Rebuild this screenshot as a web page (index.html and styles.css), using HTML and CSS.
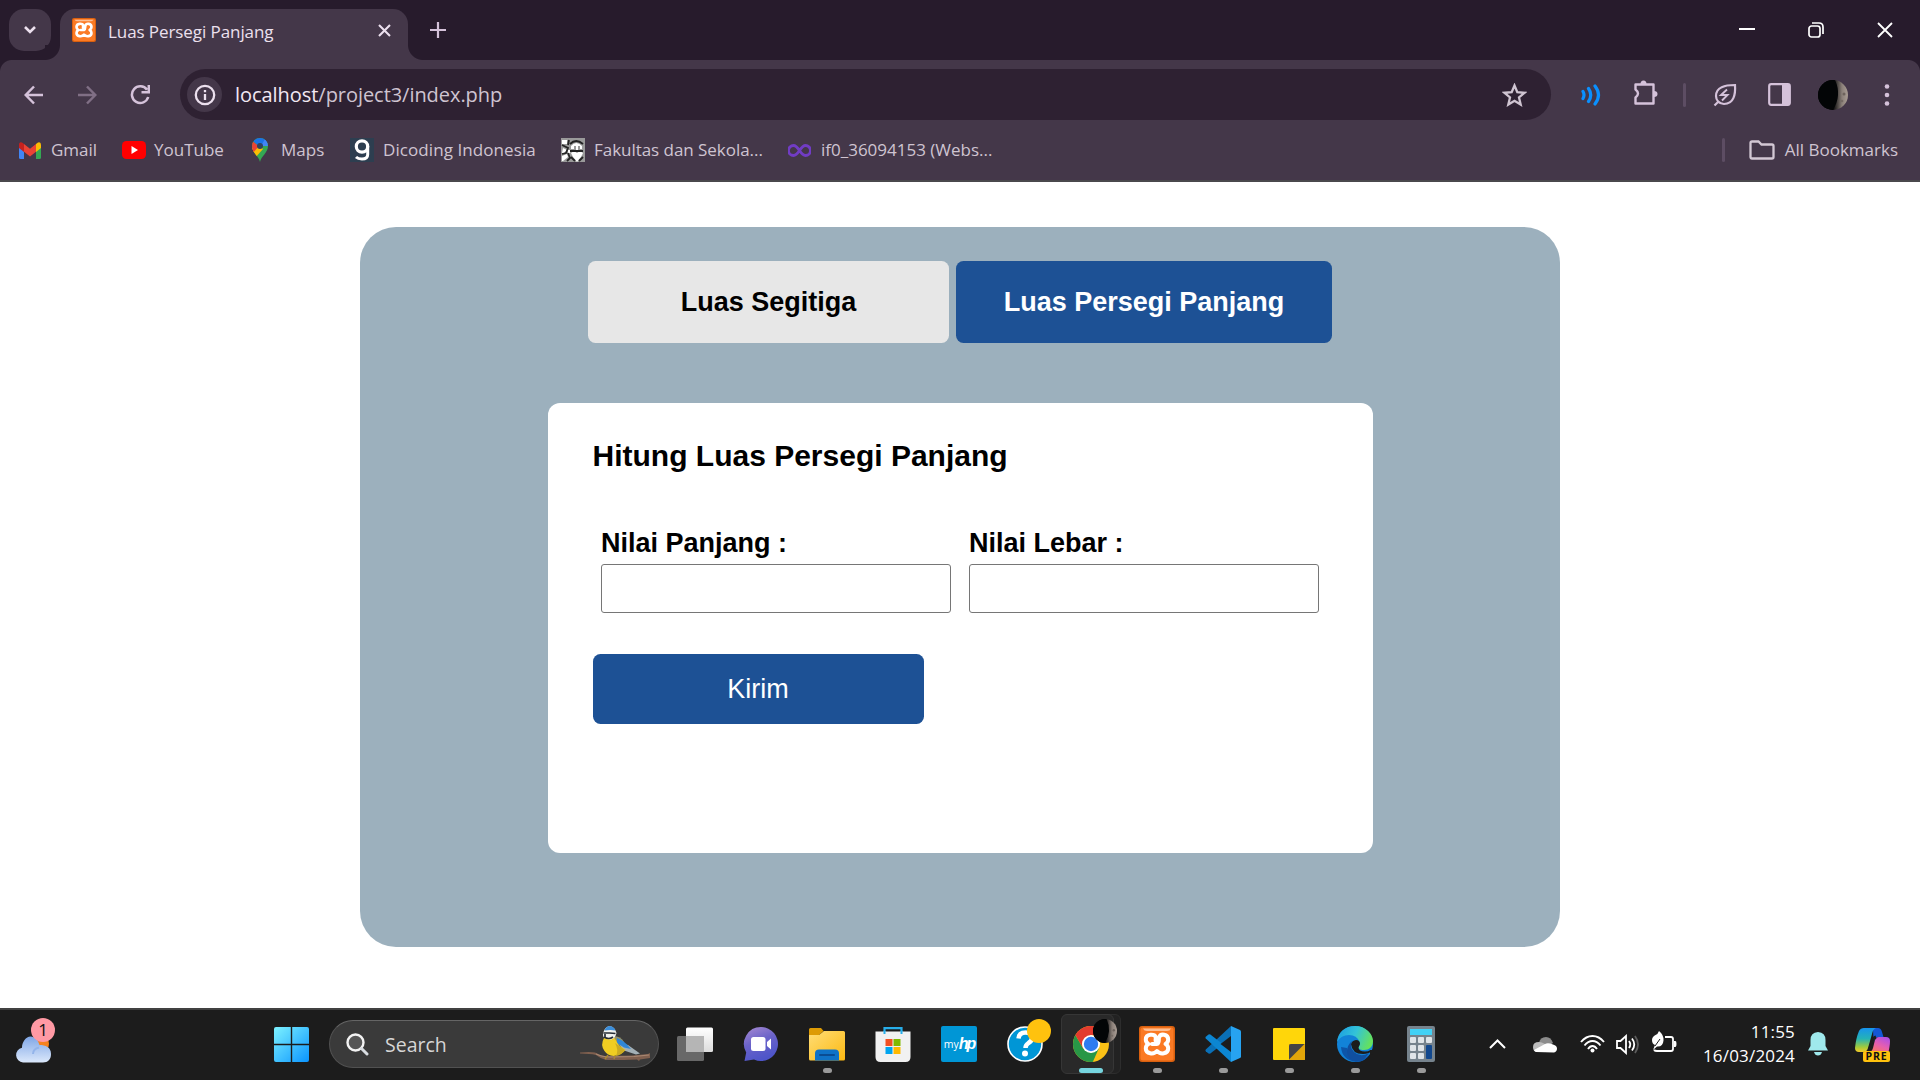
FILE: index.html
```html
<!DOCTYPE html>
<html lang="id">
<head>
<meta charset="utf-8">
<title>Luas Persegi Panjang</title>
<link rel="stylesheet" href="styles.css">
</head>
<body>
<svg class="defs" aria-hidden="true">
  <defs>
    <symbol id="xampp" viewBox="0 0 36 36">
      <rect width="36" height="36" rx="3" fill="#d9600f"/>
      <rect x="1.500" y="1.500" width="33" height="33" rx="2.500" fill="#fb7a24"/>
      <path d="M4 2.500h28q-1 2.500-4 2.500H8Q5 5 4 2.500z" fill="#fdbf94"/>
      <path d="M16.500 14.500C18 8.500 13.500 8.500 11.500 8.700 8.500 9 6.800 11 6.800 13.500c0 2.300 1.200 3.700 2.700 4.500-1.500.8-2.700 2.200-2.700 4.500 0 5.500 8 6.300 11.200 2.500 3.200 3.800 11.200 3 11.200-2.500 0-2.300-1.200-3.700-2.700-4.500 1.500-.8 2.700-2.200 2.700-4.500 0-5.500-7.700-6.500-9.200-2-.5 2 .5 5.500-2 6.500h-5" fill="none" stroke="#fff" stroke-width="4" stroke-linecap="round" stroke-linejoin="round"/>
    </symbol>
    <symbol id="moon" viewBox="0 0 30 30">
      <clipPath id="mc"><circle cx="15" cy="15" r="15"/></clipPath>
      <linearGradient id="mg"><stop offset=".5" stop-color="#050607"/><stop offset=".8" stop-color="#8b8079"/><stop offset="1" stop-color="#a99d94"/></linearGradient>
      <g clip-path="url(#mc)">
        <rect width="30" height="30" fill="url(#mg)"/>
        <path d="M17 0q7 15-2 30H0V0z" fill="#030506"/>
        <circle cx="26" cy="14" r="1.500" fill="#6d635d"/><circle cx="24" cy="21" r="1.300" fill="#746a63"/>
      </g>
    </symbol>
  </defs>
</svg>

<div class="screen">
  <header class="browser">
    <div class="tabstrip">
      <button class="tab-search"><svg width="14" height="10" viewBox="0 0 14 10"><path d="M2 2l5 5 5-5" fill="none" stroke="#ece0ee" stroke-width="2.600"/></svg></button>
      <div class="tab">
        <svg width="24" height="24"><use href="#xampp"/></svg>
        <span class="tab-title">Luas Persegi Panjang</span>
        <svg width="13" height="13" viewBox="0 0 13 13"><path d="M1 1l11 11M12 1L1 12" stroke="#ece0ee" stroke-width="2.100"/></svg>
      </div>
      <svg class="new-tab" width="16" height="16" viewBox="0 0 16 16"><path d="M8 0v16M0 8h16" stroke="#d5c2da" stroke-width="2.200"/></svg>
      <div class="window-controls">
        <svg width="16" height="16" viewBox="0 0 16 16"><path d="M0 7h16" stroke="#fff" stroke-width="2"/></svg>
        <svg width="16" height="16" viewBox="0 0 16 16" fill="none" stroke="#fff" stroke-width="1.700"><rect x="1" y="4" width="11" height="11" rx="2.500"/><path d="M4 1h7q4 0 4 4v7"/></svg>
        <svg width="16" height="16" viewBox="0 0 16 16"><path d="M1 1l14 14M15 1L1 15" stroke="#fff" stroke-width="1.800"/></svg>
      </div>
    </div>

    <div class="toolbar">
      <div class="nav">
        <svg width="20" height="20" viewBox="0 0 20 20" fill="none" stroke="#d5c2da" stroke-width="2.500"><path d="M19 10H2M10 1.500L1.700 10l8.300 8.500"/></svg>
        <svg width="20" height="20" viewBox="0 0 20 20" fill="none" stroke="#806f85" stroke-width="2.500"><path d="M1 10h17M10 1.500l8.300 8.500-8.300 8.500"/></svg>
        <svg width="20" height="20" viewBox="0 0 20 20" fill="none" stroke="#d5c2da" stroke-width="2.500"><path d="M17 4.800A8.300 8.300 0 1 0 18.200 12M18.800 0v7.300h-7.300"/></svg>
      </div>
      <div class="omnibox">
        <span class="site-info"><svg width="22" height="22" viewBox="0 0 22 22"><circle cx="11" cy="11" r="9.200" fill="none" stroke="#ece0ee" stroke-width="2.300"/><path d="M11 10v6M11 6v2.200" stroke="#ece0ee" stroke-width="2.300"/></svg></span>
        <span class="url"><b>localhost</b>/project3/index.php</span>
        <svg class="star" width="25" height="24" viewBox="0 0 25 24"><path d="M12.500 2.500l2.800 6.700 7.200.6-5.500 4.700 1.700 7.100-6.200-3.800-6.200 3.800L8 14.500 2.500 9.800l7.200-.6z" fill="none" stroke="#cfc4d1" stroke-width="2.300"/></svg>
      </div>
      <div class="tools">
        <svg width="20" height="22" viewBox="0 0 20 22" fill="none" stroke="#0a90ff" stroke-width="3.200" stroke-linecap="round"><path d="M2 7.500q2 3.500 0 7M7.500 4.500q4.500 6.500 0 13M14 2q7 9 0 18"/></svg>
        <svg class="puzzle" width="26" height="26" viewBox="0 0 26 26"><path d="M3.500 4.500h18v19h-18v-6q5-4 0-8z" fill="none" stroke="#d5c2da" stroke-width="2.400" stroke-linejoin="round"/><path d="M8.500 4a3 3.500 0 0 1 6 0zM22 11a3.500 3 0 0 1 0 6z" fill="#d5c2da"/></svg>
        <i class="rule"></i>
        <svg class="leaf" width="24" height="24" viewBox="0 0 24 24" fill="none" stroke="#d5c2da" stroke-width="2.200"><path d="M22 2c.6 9-1 19-11 19-5 0-8-4-8-8C3 4 12 2 22 2zM1.500 22.500L6 18"/><path d="M14 6.500L8 12h6.500l-5.500 5.500" stroke-width="1.900"/></svg>
        <svg class="panel" width="23" height="23" viewBox="0 0 23 23"><rect x="1.200" y="1.200" width="20.600" height="20.600" rx="2" fill="none" stroke="#d5c2da" stroke-width="2.200"/><path d="M14 1h8v21h-8z" fill="#d5c2da"/></svg>
        <svg class="avatar" width="30" height="30"><use href="#moon"/></svg>
        <svg class="dots" width="6" height="24" viewBox="0 0 6 24" fill="#d5c2da"><circle cx="3" cy="3.500" r="2.300"/><circle cx="3" cy="12" r="2.300"/><circle cx="3" cy="20.500" r="2.300"/></svg>
      </div>
    </div>

    <nav class="bookmarks">
      <a class="bm gmail"><svg width="22" height="17" viewBox="0 0 22 17"><path d="M0 3h5v14H1.500Q0 17 0 15.500z" fill="#4285f4"/><path d="M22 3h-5v14h3.500q1.500 0 1.500-1.500z" fill="#34a853"/><path d="M17 2l2-1.600q3-1 3 2.600v3l-5 4z" fill="#fbbc04"/><path d="M5 2L3 .4Q0-.6 0 3v3l5 4z" fill="#c5221f"/><path d="M5 2l6 4.800L17 2v7.800l-6 4.700-6-4.700z" fill="#ea4335"/></svg>Gmail</a>
      <a class="bm youtube"><svg width="24" height="18" viewBox="0 0 24 18"><rect width="24" height="18" rx="4.500" fill="#f00"/><path d="M9.500 5l6.500 4-6.500 4z" fill="#fff"/></svg>YouTube</a>
      <a class="bm maps"><svg width="16" height="24" viewBox="0 0 16 24"><clipPath id="pin"><path d="M8 24C7 18 0 15 0 8a8 8 0 0 1 16 0c0 7-7 10-8 16z"/></clipPath><g clip-path="url(#pin)"><path d="M0 0h16v24H0z" fill="#34a853"/><path d="M0 18V10L6 6l5 5-8 9z" fill="#fbbc04"/><path d="M0 3l7 5-7 8z" fill="#ea4335"/><path d="M0 2V0h16v3L8 9 2 4z" fill="#1a73e8"/><path d="M13 1l3 4v3H9z" fill="#4285f4"/></g><circle cx="8" cy="8" r="3" fill="#30435f"/></svg>Maps</a>
      <a class="bm dicoding"><svg width="24" height="24" viewBox="0 0 24 24"><rect width="24" height="24" fill="#2d3e50"/><circle cx="12" cy="8.500" r="5.700" fill="none" stroke="#fff" stroke-width="3.200"/><path d="M17.700 8v8.500q0 4.500-5.700 4.500-4 0-6-2" fill="none" stroke="#fff" stroke-width="3"/></svg>Dicoding Indonesia</a>
      <a class="bm fakultas"><svg width="24" height="24" viewBox="0 0 24 24"><rect width="24" height="24" fill="#9a9a9a"/><path d="M1 2h5v4H1zM10 8q5-6 11 0v3h-2V8h-2v4h-2V8h-2v3h-3zM2 10l4 2-3 3H1zM1 18l5-2 1 3-5 4H1zM7 12h3l-1 3H7zM10 15l3-2 3 2 3-2 3 2-2 4-4 5-4-5z" fill="#fff"/><path d="M9 6q6-6 13 0M1 7l6 3-2 5-4 1M7 15l2 5-3 3M9 13h13M10 19l4 4M22 19l-4 4M8 2l-1 5" fill="none" stroke="#242424" stroke-width="1.800"/></svg>Fakultas dan Sekola...</a>
      <a class="bm infinity"><svg width="23" height="13" viewBox="0 0 23 13"><path d="M11.500 6.500C8.500 2 7 1.500 5.500 1.500a5 5 0 0 0 0 10c1.500 0 3-.5 6-5s4.500-5 6-5a5 5 0 0 1 0 10c-1.500 0-3-.5-6-5z" fill="none" stroke="#713cc4" stroke-width="2.800"/></svg>if0_36094153 (Webs...</a>
      <a class="bm all"><i class="rule"></i><svg width="26" height="20" viewBox="0 0 26 20"><path d="M3 1.500h6.500l3 3H23q1.500 0 1.500 1.500v11q0 1.500-1.500 1.500H3q-1.500 0-1.500-1.500V3q0-1.500 1.500-1.500z" fill="none" stroke="#d3c8d4" stroke-width="2.300"/></svg>All Bookmarks</a>
    </nav>
  </header>

  <main class="page">
    <section class="container">
      <div class="choices">
        <a class="choice light">Luas Segitiga</a>
        <a class="choice active">Luas Persegi Panjang</a>
      </div>
      <form class="card">
        <h2>Hitung Luas Persegi Panjang</h2>
        <div class="fields">
          <label>Nilai Panjang :<input type="text"></label>
          <label>Nilai Lebar :<input type="text"></label>
        </div>
        <button class="submit" type="button">Kirim</button>
      </form>
    </section>
  </main>

  <footer class="taskbar">
    <div class="weather">
      <svg width="38" height="28" viewBox="0 0 38 28"><defs><linearGradient id="cl" x2="0" y2="1"><stop stop-color="#7fa6e6"/><stop offset="1" stop-color="#dbe8fb"/></linearGradient></defs><circle cx="25" cy="8" r="9" fill="#f5821f"/><path d="M8 26.500a7.500 7.500 0 0 1-1-14.800C7 6 11 .5 15.500.5S23 4 24.500 9c6 0 11.500 2 11.500 9 0 5.500-3 8.500-8 8.500z" fill="url(#cl)"/><path d="M18 18q0-5 6-6.500" fill="none" stroke="#93b4ea" stroke-width="2"/></svg>
      <span class="count">1</span>
    </div>

    <svg class="start" width="35" height="35" viewBox="0 0 35 35"><defs><linearGradient id="win" x2="1" y2="1"><stop stop-color="#7df2ff"/><stop offset="1" stop-color="#0a94ff"/></linearGradient></defs><path d="M2 0h14.800v16.800H0V2q0-2 2-2zM18.200 0H33q2 0 2 2v14.800H18.200zM0 18.200h16.800V35H2q-2 0-2-2zM18.200 18.200H35V33q0 2-2 2H18.200z" fill="url(#win)"/></svg>

    <div class="search">
      <svg class="lens" width="23" height="23" viewBox="0 0 23 23"><circle cx="9.500" cy="9.500" r="8" fill="#565656" stroke="#f3f3f3" stroke-width="2.400"/><path d="M15.500 15.500L21 21" stroke="#d9dde2" stroke-width="3" stroke-linecap="round"/></svg>
      <span>Search</span>
      <svg class="bird" width="71" height="36" viewBox="0 0 71 36">
        <path d="M0 26.500q10-1 15 0 5 3 10 3.500l27-.5 16-1.500 2-1v5l-10 1.500-1 1.500-2-1.500-13 .5H26q-5-1-10-5-6-1.500-16-1.500z" fill="#80604f"/>
        <path d="M16 28q6 3 14 3l24-.5 15-1.500" stroke="#a88873" stroke-width="1.200" fill="none"/>
        <path d="M38 17l10 2 12 8.500-4 1-12-4z" fill="#a3b0b6"/>
        <path d="M33 10q8 0 11 6l-5 4-6-6z" fill="#94916a"/>
        <path d="M37 12q8 3 14 11l-7-1.500-7-4.500z" fill="#2f86d6"/>
        <path d="M24 12q-4 7 .5 13 3 4.500 9 5 8-1 12-6l-7-5-4-7z" fill="#f0cd22"/>
        <path d="M35 17l10 7q-3 5-9 6 3-6-1-13z" fill="#cbab22"/>
        <path d="M23.500 6Q25 1 29.500 0 35 1 36.500 7q-1 5-5 6.500-5 .5-8-2.500-1-2.500 0-5z" fill="#f2f2ee"/>
        <path d="M24.500 4.500Q26 0 30 0q4 .5 5.500 4.500-5-1-11 0z" fill="#3b8edb"/>
        <path d="M23.500 7h6l6 .5M25 8v4M24 11q5 3 9 0" fill="none" stroke="#252c35" stroke-width="1.700"/>
        <path d="M28 29l-3 4M35 30l-1 3" stroke="#a98635" stroke-width="1.500"/>
      </svg>
    </div>

    <div class="apps">
      <div class="app"><svg width="36" height="36" viewBox="0 0 36 36"><defs><linearGradient id="tv" x2="0" y2="1"><stop stop-color="#fff"/><stop offset="1" stop-color="#dcdcdc"/></linearGradient></defs><rect x="9" y="1.500" width="27" height="24.500" rx="1.500" fill="url(#tv)"/><rect x="0" y="10" width="27" height="25" rx="1.500" fill="#6d6d6d" opacity=".95"/><path d="M9 10h18v16H9z" fill="#b5b5b5"/></svg></div>
      <div class="app"><svg width="36" height="36" viewBox="0 0 36 36"><defs><linearGradient id="ch" x1="0" y1="0" x2=".4" y2="1"><stop stop-color="#a98bd2"/><stop offset=".5" stop-color="#6b63c9"/><stop offset="1" stop-color="#4e55c9"/></linearGradient></defs><path d="M18 1a17 17 0 1 1-7 32.500L1.500 35l1.700-8.500A17 17 0 0 1 18 1z" fill="url(#ch)"/><rect x="8" y="11" width="14.500" height="14" rx="2.500" fill="#fff"/><path d="M24 16l4-3.500v11L24 20z" fill="#fff"/></svg></div>
      <div class="app run"><svg width="36" height="36" viewBox="0 0 36 36"><defs><linearGradient id="fo" x2="1" y2="1"><stop stop-color="#ffdd76"/><stop offset="1" stop-color="#fcb912"/></linearGradient></defs><path d="M0 10V3.500Q0 2 1.500 2H12l3 3.500h-1L10 9z" fill="#dd9b05"/><path d="M0 9h10l5-4h19.500Q36 5 36 6.500V33q0 1.500-1.500 1.500h-33Q0 34.500 0 33z" fill="url(#fo)"/><path d="M6 34.500v-7q0-4 4-4h16q4 0 4 4v7z" fill="#0f72c7"/><path d="M11 29h14" stroke="#0a4c93" stroke-width="2" stroke-linecap="round"/></svg></div>
      <div class="app"><svg width="36" height="36" viewBox="0 0 36 36"><path d="M9.500 8V2.200h17V8" fill="none" stroke="#27aeea" stroke-width="2.200"/><path d="M.5 5.500h35V31q0 5-5 5h-25q-5 0-5-5z" fill="#f1f1f1"/><path d="M8.500 5v3h2V5zM25.500 5v3h2V5z" fill="#27aeea"/><path d="M10.500 13H17.500v7h-7z" fill="#f25022"/><path d="M18.500 13h7v7h-7z" fill="#7fba00"/><path d="M10.500 21h7v7h-7z" fill="#00a4ef"/><path d="M18.500 21h7v7h-7z" fill="#ffb900"/></svg></div>
      <div class="app"><span class="myhp"><span>my</span><b>hp</b></span></div>
      <div class="app"><svg class="help" width="36" height="36" viewBox="0 0 36 36"><circle cx="18" cy="18" r="17" fill="#0096d6" stroke="#fff" stroke-width="1.600"/><path d="M11.500 12.500q.5-6 7-6t6.500 5.500q0 3-3.500 5-3 2-3 5" fill="none" stroke="#fff" stroke-width="4.500"/><circle cx="18" cy="27.500" r="3" fill="#fff"/></svg><i class="yellow-dot"></i></div>
      <div class="app current"><i class="stack"></i><i class="plate"></i><svg class="front" width="36" height="36" viewBox="0 0 36 36"><clipPath id="cc"><circle cx="18" cy="18" r="18"/></clipPath><g clip-path="url(#cc)"><path d="M0 0h36v36H0z" fill="#fbc116"/><path d="M10.200 22.500L2.400 9-6 20l8 20h16l7.800-17.500L18 27z" fill="#289747"/><path d="M2.400 9L10.200 22.500 9 18l9-9h20V-4H0z" fill="#e33b2e"/></g><circle cx="18" cy="18" r="9" fill="#fff"/><circle cx="18" cy="18" r="7.200" fill="#2f7cf0"/></svg><svg class="profile" width="24" height="24"><use href="#moon"/></svg></div>
      <div class="app run"><svg width="36" height="36"><use href="#xampp"/></svg></div>
      <div class="app run"><svg width="36" height="36" viewBox="0 0 36 36"><path d="M26 0L.8 23.500q-.8.800 0 1.700l2.700 2.300 1.500.2L28 10z" fill="#0a70b7"/><path d="M26 36L.8 12.500q-.8-.8 0-1.700l2.700-2.300L5 8.300 28 26z" fill="#0c86d2"/><path d="M26 0l9 4q1 .5 1 1.500v25q0 1-1 1.500l-9 4z" fill="#27a3f1"/><path d="M26 10v16L15.500 18z" fill="#1c1c1c"/></svg></div>
      <div class="app run"><svg width="36" height="36" viewBox="0 0 36 36"><rect x="2" y="2" width="32" height="32" rx="1" fill="#ffd60a"/><path d="M18 34V18h16v15l-1 1z" fill="#e2a60a"/><path d="M18 33.500V20q0-2 2-2h13.500z" fill="#454545"/></svg></div>
      <div class="app run"><svg width="36" height="36" viewBox="0 0 36 36"><defs><linearGradient id="e1" y1=".2" x2="1" y2=".5"><stop stop-color="#1b9de2"/><stop offset=".5" stop-color="#33c3d8"/><stop offset="1" stop-color="#66e25b"/></linearGradient></defs><circle cx="18" cy="18" r="18" fill="#1283d8"/><path d="M10 22q2 12 15 10.500 5-1 8-5.500-4 9-14 9-14-2-15-15z" fill="#0d55a8"/><path d="M0 16C1 6 8 0 18 0c11 0 18 8 18 15 0 6-4 9-9 9-4 0-6-1.500-5.500-3 1-1.500 2-2.500 1-5Q20 9 12 9 4 9 0 16z" fill="url(#e1)"/><path d="M14 18q1-3.500 5-4 4 0 4 4-1 2-1.500 3.500 0 4 6.500 4 3 0 5.500-1.500 1.500 0 .5 1.500-2 2-8 2.500-11 0-12-10z" fill="#1c1c1c"/><path d="M33 24l4 0v4l-4 1z" fill="#1c1c1c"/><path d="M15 15q-3 6 2 11 6 6 15 1-4 7-12 8-9 0-10-9 0-7 5-11z" fill="#104f9f"/></svg></div>
      <div class="app run"><svg width="36" height="36" viewBox="0 0 36 36"><rect x="4" width="28" height="36" rx="2" fill="#76838d"/><path d="M7 3h22v6H7z" fill="#42d1f5"/><g fill="#dfe4e8"><rect x="7" y="11" width="6" height="6" rx="1"/><rect x="15" y="11" width="6" height="6" rx="1"/><rect x="23" y="11" width="6" height="6" rx="1"/><rect x="7" y="19" width="6" height="6" rx="1"/><rect x="15" y="19" width="6" height="6" rx="1"/><rect x="7" y="27" width="6" height="6" rx="1"/><rect x="15" y="27" width="6" height="6" rx="1"/></g><rect x="23" y="19" width="6" height="14" rx="1" fill="#12488e"/></svg></div>
    </div>

    <div class="tray">
      <svg class="up" width="17" height="10" viewBox="0 0 17 10"><path d="M1 9l7.500-7.500L16 9" fill="none" stroke="#fff" stroke-width="2"/></svg>
      <svg class="cloud" width="24" height="17" viewBox="0 0 24 17"><path d="M6 7q1-6 7-6 5 0 7 6l-6 4z" fill="#8c8c8c"/><path d="M3 16q-3-1-3-5 0-5 6-5 3 0 5 1.500l7 3.500-6 5z" fill="#bcbcbc"/><path d="M3 16q-2-1-2-2l11-6q3-1.500 8 .5 4 1 4 4 0 3-3 4z" fill="#fff"/></svg>
      <svg class="wifi" width="25" height="18" viewBox="0 0 25 18"><g fill="none" stroke="#fff" stroke-width="1.900"><path d="M1 7q5-6 11.500-6T24 7M4.500 10.500Q8 6 12.500 6t8 4.500M8 14q2-3 4.500-3t4.500 3"/></g><circle cx="12.500" cy="15.500" r="2" fill="#fff"/></svg>
      <svg class="volume" width="24" height="21" viewBox="0 0 24 21" fill="none" stroke="#fff" stroke-width="1.800"><path d="M1 7h3.500L10 2v17l-5.500-5H1zM13 7q2.500 3.500 0 7M16 4.500q4.500 6 0 12"/><path d="M19 2q6 8.500 0 17" stroke="#5c5c5c"/></svg>
      <svg class="battery" width="25" height="22" viewBox="0 0 25 22"><path d="M13 6h6q2 0 2 2v10q0 2-2 2H5q-2 0-3-1" fill="none" stroke="#fff" stroke-width="1.800"/><path d="M22 10h1.500q1 0 1 3t-1 3H22z" fill="#fff"/><path d="M0 9q0-3 3.500-5Q6 3 7 0q5 4 4.500 9.500Q11 16 5 15.500L1 19l2-5Q0 13 0 9z" fill="#fff"/><path d="M3 15l5-7" stroke="#1c1c1c"/></svg>
      <div class="clock"><span>11:55</span><span>16/03/2024</span></div>
      <svg class="bell" width="20" height="24" viewBox="0 0 20 24" fill="#9fe9ec"><path d="M10 0q7.500.5 7.500 8v6l2.500 4.500H0L2.500 14V8Q2.500.5 10 0zM6 20h8q-1 3.500-4 3.500T6 20z"/></svg>
      <div class="copilot">
        <svg width="36" height="30" viewBox="0 0 36 30"><defs><linearGradient id="c1" x2="0" y2="1"><stop stop-color="#1793ee"/><stop offset=".45" stop-color="#25b3b5"/><stop offset=".8" stop-color="#a4cb3a"/><stop offset="1" stop-color="#f5c928"/></linearGradient><linearGradient id="c2" x1="1" x2=".3" y2="1"><stop stop-color="#a44cf0"/><stop offset=".5" stop-color="#e75fae"/><stop offset="1" stop-color="#ff8046"/></linearGradient></defs><path d="M18 0h5q3 0 4 4l1.500 5h-5q-3 0-5 5z" fill="#1457d6"/><path d="M9 0h12q-3 1-4 6l-4 14q-1 4-5 4H4q-4 0-4-4Q1 10 4 3q1.500-3 5-3z" fill="url(#c1)"/><path d="M24 9h7q4 0 4 4 0 5-2 13H8q3 0 5-1 4-1 5-5l2-8q1-3 4-3z" fill="url(#c2)"/><path d="M21 9q-3 1-4 5l-3 9" stroke="#1c1c1c" stroke-width="3" fill="none"/></svg>
        <span class="pre">PRE</span>
      </div>
    </div>
  </footer>
</div>
</body>
</html>
```

FILE: styles.css
```css
* { box-sizing: border-box; }

body {
  margin: 0;
  background: #fff;
  font-family: "Open Sans", "Noto Sans", sans-serif;
}

svg { display: block; flex: none; }

.defs { position: absolute; width: 0; height: 0; }

.screen {
  display: flex;
  flex-direction: column;
  width: 1920px;
  height: 1080px;
  overflow: hidden;
}

/* Browser frame */
.browser {
  height: 182px;
  background: #443749;
  border-bottom: 2px solid #4a484c;
}

.tabstrip {
  display: flex;
  align-items: flex-start;
  height: 60px;
  padding: 9px 27px 0 9px;
  background: #271b2c;
}

.tab-search {
  display: flex;
  align-items: center;
  justify-content: center;
  width: 42px;
  height: 42px;
  margin-right: 9px;
  padding: 0;
  border: 0;
  border-radius: 15px;
  background: #443749;
}

.tab {
  position: relative;
  display: flex;
  align-items: center;
  width: 348px;
  height: 51px;
  padding: 0 17px 9px 12px;
  border-radius: 15px 15px 0 0;
  background: #443749;
}

.tab::before,
.tab::after {
  content: "";
  position: absolute;
  bottom: 0;
  width: 15px;
  height: 15px;
}

.tab::before {
  left: -15px;
  background: radial-gradient(circle at 0 0, #271b2c 14.500px, #443749 15.500px);
}

.tab::after {
  right: -15px;
  background: radial-gradient(circle at 100% 0, #271b2c 14.500px, #443749 15.500px);
}

.tab-title {
  flex: 1;
  padding: 3px 0 0 12px;
  color: #ece0ee;
  font-size: 17px;
  line-height: 24px;
  letter-spacing: -0.080px;
  white-space: nowrap;
}

.new-tab { margin: 13px 0 0 22px; }

.window-controls {
  display: flex;
  gap: 53px;
  margin: 13px 0 0 auto;
}

/* The toolbar's top corners are rounded over the tab strip */
.toolbar {
  display: flex;
  height: 60px;
  padding: 9px 30px 0 24px;
  background:
    radial-gradient(circle at 12px 12px, transparent 11.500px, #271b2c 12.500px) 0 0 / 12px 12px no-repeat,
    radial-gradient(circle at 0 12px, transparent 11.500px, #271b2c 12.500px) 100% 0 / 12px 12px no-repeat;
}

.toolbar,
.omnibox,
.tools,
.nav { align-items: center; }

.nav {
  display: flex;
  gap: 33px;
  width: 156px;
}

.omnibox {
  display: flex;
  width: 1371px;
  height: 51px;
  padding: 0 24px 0 7px;
  border-radius: 26px;
  background: #2e2132;
}

.site-info {
  display: flex;
  align-items: center;
  justify-content: center;
  width: 35px;
  height: 35px;
  border-radius: 50%;
  background: #443749;
}

.url {
  flex: 1;
  padding-left: 13px;
  color: #cfc4d1;
  font-size: 20px;
  line-height: 28px;
  letter-spacing: -0.050px;
}

.url b { color: #f2e8f3; font-weight: 400; }

.tools { display: flex; flex: 1; padding-left: 30px; }
.puzzle { margin: -3px 0 0 31px; }

.rule {
  width: 3px;
  height: 24px;
  border-radius: 2px;
  background: #5d4d63;
}

.tools .rule { margin-left: 25px; }
.leaf { margin-left: 27px; }
.panel { margin-left: 31px; }
.avatar { margin-left: 27px; }
.dots { margin-left: 36px; }

.bookmarks {
  display: flex;
  align-items: center;
  height: 60px;
  padding: 0 22px 0 19px;
  color: #cfc4d1;
  font-size: 17px;
}

.bm {
  display: flex;
  align-items: center;
  gap: 10px;
  line-height: 24px;
  white-space: nowrap;
}

.gmail { width: 103px; }
.youtube { width: 130px; gap: 8px; }
.maps { width: 98px; gap: 13px; }
.dicoding { width: 211px; gap: 9px; letter-spacing: 0.080px; }
.fakultas { width: 227px; gap: 9px; letter-spacing: -0.040px; }
.all { gap: 10px; margin-left: auto; }
.all .rule { margin-right: 14px; }

/* Calculator page */
.page { flex: 1; padding-top: 45px; background: #fff; }

.container {
  display: flex;
  flex-direction: column;
  align-items: center;
  width: 1200px;
  height: 720px;
  margin: 0 auto;
  padding-top: 34px;
  border-radius: 36px;
  background: #9cb0bd;
  color: #000;
  font: 27px "Liberation Sans", Arial, sans-serif;
}

.choices { display: flex; gap: 7px; }

.choice {
  display: flex;
  align-items: center;
  justify-content: center;
  width: 361px;
  height: 82px;
  border-radius: 7.500px;
  font-weight: 700;
}

.light { background: #e7e7e7; }
.active { width: 376px; background: #1d5195; color: #fff; }

.card {
  width: 825px;
  height: 450px;
  margin-top: 60px;
  padding: 36px 45px;
  border-radius: 12px;
  background: #fff;
}

.card h2 { margin: 0 0 55px; font-size: 30px; line-height: 34px; }

.fields { display: flex; gap: 18px; padding-left: 8.500px; }

.fields label {
  display: flex;
  flex-direction: column;
  gap: 5px;
  width: 350px;
  font-weight: 700;
  line-height: 31px;
}

.fields input {
  width: 350px;
  height: 49px;
  border: 1px solid #767676;
  border-radius: 3px;
  background: #fff;
}

.submit {
  display: block;
  width: 331px;
  height: 70px;
  margin-top: 41px;
  border: 0;
  border-radius: 7.500px;
  background: #1d5195;
  color: #fff;
  font: 27px "Liberation Sans", Arial, sans-serif;
}

/* Taskbar */
.taskbar {
  display: flex;
  align-items: center;
  height: 72px;
  border-top: 2px solid #414141;
  background: #1c1c1c;
}

.weather {
  position: relative;
  width: 259px;
  height: 46px;
  padding: 14px 0 0 15px;
}

.count {
  position: absolute;
  left: 31px;
  top: -4px;
  width: 24px;
  height: 24px;
  border-radius: 50%;
  background: #ff99a4;
  color: #111;
  font-size: 17px;
  line-height: 24px;
  text-align: center;
}

.start { margin: -2px 0 0 15px; }

.search {
  display: flex;
  align-items: center;
  width: 330px;
  height: 48px;
  margin: -2px 0 0 20px;
  padding: 0 7px 0 16px;
  border: 1.500px solid #515151;
  border-top-color: #656565;
  border-radius: 24px;
  background: #3a3a3a;
  color: #d6d6d6;
  font-size: 19.500px;
}

.search span { flex: 1; padding-left: 16px; }

.apps { display: flex; margin-left: 3px; }

.app {
  position: relative;
  display: flex;
  align-items: center;
  justify-content: center;
  width: 66px;
  height: 70px;
  padding-bottom: 2px;
}

.run::after,
.current::after {
  content: "";
  position: absolute;
  bottom: 7px;
  width: 9px;
  height: 5px;
  border-radius: 3px;
  background: #9a9a9a;
}

.current::after { width: 24px; background: #76d5df; }

.myhp {
  display: flex;
  align-items: center;
  justify-content: center;
  width: 36px;
  height: 36px;
  border-radius: 2px;
  background: #0096d6;
  color: #fff;
  font-size: 10.500px;
  line-height: 20px;
}

.myhp b {
  font: italic 700 16px/20px "Liberation Sans", sans-serif;
  letter-spacing: -2px;
}

.yellow-dot {
  position: absolute;
  left: 35px;
  top: 9px;
  width: 24px;
  height: 24px;
  border-radius: 50%;
  background: #ffc20e;
}

.plate,
.stack {
  position: absolute;
  left: 3px;
  top: 4px;
  width: 53px;
  height: 60px;
  border: 1px solid #363636;
  border-radius: 6px;
  background: #292929;
}

.stack { left: 10px; background: #222; border-color: #2d2d2d; }
.front { position: relative; }
.profile { position: absolute; left: 35px; top: 9px; }

.tray {
  display: flex;
  align-items: center;
  margin: -2px 0 0 35px;
}

.cloud { margin-left: 27px; }
.wifi { margin-left: 23px; }
.volume { margin-left: 11px; }
.battery { margin: -4px 0 0 12px; }

.clock {
  display: flex;
  flex-direction: column;
  align-items: flex-end;
  width: 118px;
  color: #fff;
  font-size: 17px;
  line-height: 24px;
  letter-spacing: 0.180px;
}

.bell { margin-left: 13px; }

.copilot { position: relative; margin: -3px 0 0 27px; }

.pre {
  position: absolute;
  left: 8px;
  top: 23px;
  width: 27px;
  height: 11px;
  border-radius: 2px;
  background: #ffc20e;
  color: #111;
  font-size: 10.500px;
  font-weight: 700;
  line-height: 11px;
  letter-spacing: 0.900px;
  text-align: center;
}
```
